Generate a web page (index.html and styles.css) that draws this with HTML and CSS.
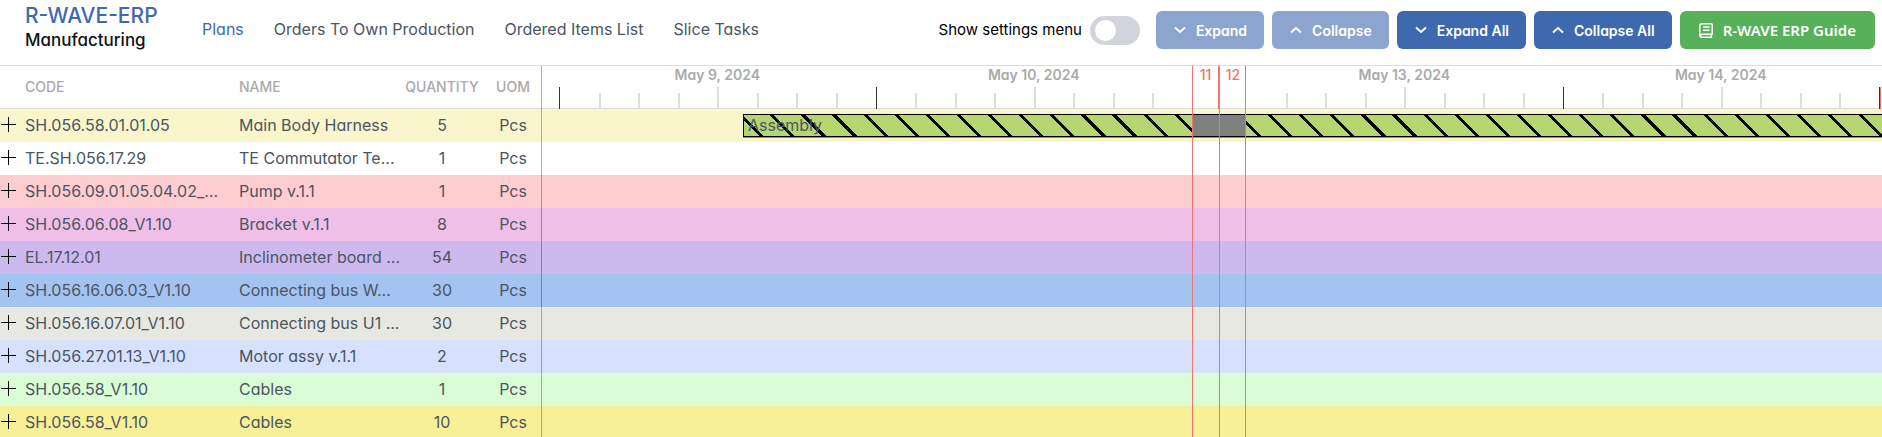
FILE: index.html
```html
<!DOCTYPE html>
<html lang="en">
<head>
    <meta charset="UTF-8">
    <meta name="viewport" content="width=device-width, initial-scale=1">
    <title>R-WAVE-ERP Manufacturing</title>
    <link rel="stylesheet" href="styles.css">
</head>
<body>

    <header class="topbar">
        <div class="brand">
            <span class="brand-name">R-WAVE-ERP</span>
            <span class="brand-module">Manufacturing</span>
        </div>

        <nav class="menu">
            <a class="active" href="#plans">Plans</a>
            <a href="#orders">Orders To Own Production</a>
            <a href="#items">Ordered Items List</a>
            <a href="#tasks">Slice Tasks</a>
        </nav>

        <div class="actions">
            <label class="switch">
                <span>Show settings menu</span>
                <input type="checkbox">
            </label>
            <button class="btn" type="button" disabled>
                <svg class="chevron" viewBox="0 0 12 8"><path d="M1 1.500 6 6l5-4.500"/></svg>
                Expand
            </button>
            <button class="btn" type="button" disabled>
                <svg class="chevron" viewBox="0 0 12 8"><path d="M1 6.500 6 2l5 4.500"/></svg>
                Collapse
            </button>
            <button class="btn" type="button">
                <svg class="chevron" viewBox="0 0 12 8"><path d="M1 1.500 6 6l5-4.500"/></svg>
                Expand All
            </button>
            <button class="btn" type="button">
                <svg class="chevron" viewBox="0 0 12 8"><path d="M1 6.500 6 2l5 4.500"/></svg>
                Collapse All
            </button>
            <a class="btn guide" href="#guide">
                <svg class="book" viewBox="0 0 14 15"><path d="M13.200.8H3A2 2 0 0 0 .8 3v9a2 2 0 0 0 2.200 2.200h10.200M13.200.8v10.400H3a1.500 1.500 0 0 0 0 3M12.200 11.500v2.500M4 4h6.500M4 7.200h6.500"/></svg>
                R-WAVE ERP Guide
            </a>
        </div>
    </header>

    <main class="gantt">
        <table class="items">
            <colgroup>
                <col class="col-toggle">
                <col class="col-code">
                <col class="col-name">
                <col class="col-qty">
                <col class="col-uom">
            </colgroup>
            <thead>
                <tr>
                    <th></th>
                    <th>CODE</th>
                    <th>NAME</th>
                    <th class="center">QUANTITY</th>
                    <th class="center">UOM</th>
                </tr>
            </thead>
            <tbody>
                <tr class="cream">
                    <td><button class="plus" type="button" aria-label="Expand row"></button></td>
                    <td>SH.056.58.01.01.05</td>
                    <td>Main Body Harness</td>
                    <td class="center">5</td>
                    <td class="center">Pcs</td>
                </tr>
                <tr class="white">
                    <td><button class="plus" type="button" aria-label="Expand row"></button></td>
                    <td>TE.SH.056.17.29</td>
                    <td>TE Commutator Te...</td>
                    <td class="center">1</td>
                    <td class="center">Pcs</td>
                </tr>
                <tr class="red">
                    <td><button class="plus" type="button" aria-label="Expand row"></button></td>
                    <td>SH.056.09.01.05.04.02_...</td>
                    <td>Pump v.1.1</td>
                    <td class="center">1</td>
                    <td class="center">Pcs</td>
                </tr>
                <tr class="pink">
                    <td><button class="plus" type="button" aria-label="Expand row"></button></td>
                    <td>SH.056.06.08_V1.10</td>
                    <td>Bracket v.1.1</td>
                    <td class="center">8</td>
                    <td class="center">Pcs</td>
                </tr>
                <tr class="violet">
                    <td><button class="plus" type="button" aria-label="Expand row"></button></td>
                    <td>EL.17.12.01</td>
                    <td>Inclinometer board ...</td>
                    <td class="center">54</td>
                    <td class="center">Pcs</td>
                </tr>
                <tr class="blue">
                    <td><button class="plus" type="button" aria-label="Expand row"></button></td>
                    <td>SH.056.16.06.03_V1.10</td>
                    <td>Connecting bus W...</td>
                    <td class="center">30</td>
                    <td class="center">Pcs</td>
                </tr>
                <tr class="gray">
                    <td><button class="plus" type="button" aria-label="Expand row"></button></td>
                    <td>SH.056.16.07.01_V1.10</td>
                    <td>Connecting bus U1 ...</td>
                    <td class="center">30</td>
                    <td class="center">Pcs</td>
                </tr>
                <tr class="sky">
                    <td><button class="plus" type="button" aria-label="Expand row"></button></td>
                    <td>SH.056.27.01.13_V1.10</td>
                    <td>Motor assy v.1.1</td>
                    <td class="center">2</td>
                    <td class="center">Pcs</td>
                </tr>
                <tr class="green">
                    <td><button class="plus" type="button" aria-label="Expand row"></button></td>
                    <td>SH.056.58_V1.10</td>
                    <td>Cables</td>
                    <td class="center">1</td>
                    <td class="center">Pcs</td>
                </tr>
                <tr class="yellow">
                    <td><button class="plus" type="button" aria-label="Expand row"></button></td>
                    <td>SH.056.58_V1.10</td>
                    <td>Cables</td>
                    <td class="center">10</td>
                    <td class="center">Pcs</td>
                </tr>
            </tbody>
        </table>

        <section class="timeline">
            <div class="scale days">
                <div></div>
                <div class="day">May 9, 2024<div class="ticks"><i></i><i></i><i></i><i></i><i></i><i></i><i></i><i></i></div></div>
                <div class="day">May 10, 2024<div class="ticks"><i></i><i></i><i></i><i></i><i></i><i></i><i></i><i></i></div></div>
                <div class="day off">11</div>
                <div class="day off sunday">12</div>
                <div class="day monday">May 13, 2024<div class="ticks"><i></i><i></i><i></i><i></i><i></i><i></i><i></i><i></i></div></div>
                <div class="day">May 14, 2024<div class="ticks"><i></i><i></i><i></i><i></i><i></i><i></i><i></i><i></i></div></div>
                <div class="day last"></div>
            </div>
            <div class="lane cream">
                <div class="task" style="margin-left: 202px">Assembly</div>
                <div class="days pause"><div class="pause-block"></div></div>
            </div>
            <div class="lane white"></div>
            <div class="lane red"></div>
            <div class="lane pink"></div>
            <div class="lane violet"></div>
            <div class="lane blue"></div>
            <div class="lane gray"></div>
            <div class="lane sky"></div>
            <div class="lane green"></div>
            <div class="lane yellow"></div>

            <!-- weekend borders, drawn over the scale and all lanes -->
            <div class="days weekend">
                <div class="weekend-day sat"></div>
                <div class="weekend-day sun"></div>
            </div>
        </section>
    </main>

</body>
</html>
```
FILE: styles.css
```css
* {
    box-sizing: border-box;
}

body {
    display: flex;
    flex-direction: column;
    height: 100vh;
    margin: 0;
    font-family: Inter, sans-serif;
    font-feature-settings: "cv11";
    font-optical-sizing: none;
    font-size: 16px;
    color: #4b5563;
    background: #ffffff;
}

a {
    color: inherit;
    text-decoration: none;
}

.topbar {
    display: flex;
    flex: none;
    align-items: flex-start;
    height: 66px;
    padding: 0 7px 0 25px;
    border-bottom: 1px solid #dddddd;
}

.brand {
    display: flex;
    flex-direction: column;
    width: 177px;
    padding-top: 4px;
    font-weight: 500;
    line-height: 24px;
}

.brand-name {
    font-size: 21px;
    color: #3f69af;
}

.brand-module {
    font-size: 17px;
    color: #111111;
}

.menu {
    display: flex;
    gap: 30px;
    line-height: 58px;
}

.menu .active {
    color: #3f69af;
}

.actions {
    display: flex;
    align-items: center;
    gap: 8px;
    margin-left: auto;
    padding-top: 11px;
}

.switch {
    display: flex;
    align-items: center;
    gap: 8px;
    margin-right: 8px;
    font-size: 15px;
    line-height: 26px;
    color: #000000;
}

.switch input {
    appearance: none;
    width: 50px;
    height: 29px;
    margin: 0;
    padding: 4px 5px;
    border-radius: 15px;
    background: #d1d5db;
}

.switch input::before {
    content: "";
    display: block;
    width: 21px;
    height: 21px;
    border-radius: 50%;
    background: #ffffff;
}

.switch input:checked {
    padding-left: 24px;
    background: #3f69af;
}

.btn {
    display: flex;
    align-items: center;
    gap: 10px;
    height: 38px;
    padding: 0 17px 0 18px;
    border: 0;
    border-radius: 6px;
    background: #3f69af;
    color: #ffffff;
    font-family: inherit;
    font-feature-settings: inherit;
    font-size: 14px;
    font-weight: 600;
    white-space: nowrap;
}

.btn:disabled {
    background: #8ca5cf;
}

.btn.guide {
    padding: 0 19px;
    background: #56b15a;
    font-family: "Noto Sans", sans-serif;
    font-size: 15px;
}

.btn svg {
    fill: none;
    stroke: currentColor;
}

.chevron {
    width: 12px;
    height: 8px;
    stroke-width: 2;
}

.book {
    width: 14px;
    height: 15px;
    stroke-width: 1.5;
}

.gantt {
    display: flex;
    flex: 1;
    align-items: flex-start;
    min-height: 0;
    overflow: hidden;
}

.items {
    flex: none;
    width: 541px;
    table-layout: fixed;
    border-spacing: 0;
}

.col-toggle {
    width: 25px;
}

.col-code {
    width: 214px;
}

.col-name {
    width: 160px;
}

.col-qty {
    width: 86px;
}

.items th,
.items td {
    height: 33px;
    padding: 0 0 2px;
    text-align: left;
    white-space: nowrap;
}

.items th {
    height: 43px;
    border-bottom: 1px solid #dddddd;
    font-size: 14px;
    font-weight: 500;
    color: #aaaaaa;
}

.items .center {
    text-align: center;
}

.plus {
    display: block;
    width: 15px;
    height: 15px;
    margin-left: 1px;
    padding: 0;
    border: 0;
    background:
        linear-gradient(#000000, #000000) center / 15px 1px no-repeat,
        linear-gradient(#000000, #000000) center / 1px 15px no-repeat;
}

.timeline {
    position: relative;
    flex: 1;
    min-width: 0;
}

.timeline::before {
    content: "";
    position: absolute;
    z-index: 1;
    inset: 0 auto 0 0;
    width: 1px;
    background: rgba(0, 0, 0, 0.3);
}

.days {
    display: grid;
    grid-template-columns: 18px 1fr 1fr 27px 27px 1fr 1fr 3px;
}

.scale {
    height: 43px;
    border-bottom: 1px solid #dddddd;
}

.day {
    display: flex;
    flex-direction: column;
    justify-content: space-between;
    height: 43px;
    line-height: 18px;
    text-align: center;
    font-size: 14px;
    font-weight: 600;
    color: #aaaaaa;
}

.ticks {
    display: grid;
    grid-template-columns: repeat(8, 1fr);
    align-items: end;
    height: 22px;
}

.ticks i {
    height: 15px;
    margin-bottom: 1px;
    border-left: 2px solid #dddddd;
}

.ticks i:first-child {
    height: 22px;
    margin: 0;
    border-left: 1px solid #333333;
}

.ticks i:nth-child(5) {
    height: 21px;
}

.monday i:first-child {
    visibility: hidden;
}

.off {
    color: #f07470;
    font-weight: 500;
}

.sunday {
    margin-left: -1px;
    border-left: 2px solid #f07470;
}

.last::after {
    content: "";
    width: 2px;
    height: 22px;
    margin-top: auto;
    border-left: 1px solid #333333;
    box-shadow: inset 1px 0 #f07470;
}

.lane {
    position: relative;
    height: 33px;
    padding-top: 5px;
}

.task {
    height: 23px;
    padding-left: 4px;
    border: 1px solid #000000;
    border-right: 0;
    box-shadow: 0 1px rgba(0, 0, 0, 0.4);
    line-height: 21px;
    background: repeating-linear-gradient(45deg, #b5d571 0 11px, #000000 11px 14px, #b5d571 14px 22px);
}

.pause {
    position: absolute;
    inset: 6px 0;
}

.pause-block {
    grid-column: 4 / 6;
    background: #808080;
}

.weekend {
    position: absolute;
    inset: 0;
    pointer-events: none;
}

.weekend-day {
    border-left: 1px solid #f07470;
}

.sat {
    grid-column: 4;
}

.sun {
    grid-column: 5;
    border-right: 1px solid #f07470;
}

.cream {
    background: #faf6cb;
}

.white {
    background: #ffffff;
}

.red {
    background: #fecdd0;
}

.pink {
    background: #f0bfe7;
}

.violet {
    background: #cdb9ee;
}

.blue {
    background: #a3c3f1;
}

.gray {
    background: #e8e8e2;
}

.sky {
    background: #d6e2fd;
}

.green {
    background: #dafdd6;
}

.yellow {
    background: #f8f096;
}
```
